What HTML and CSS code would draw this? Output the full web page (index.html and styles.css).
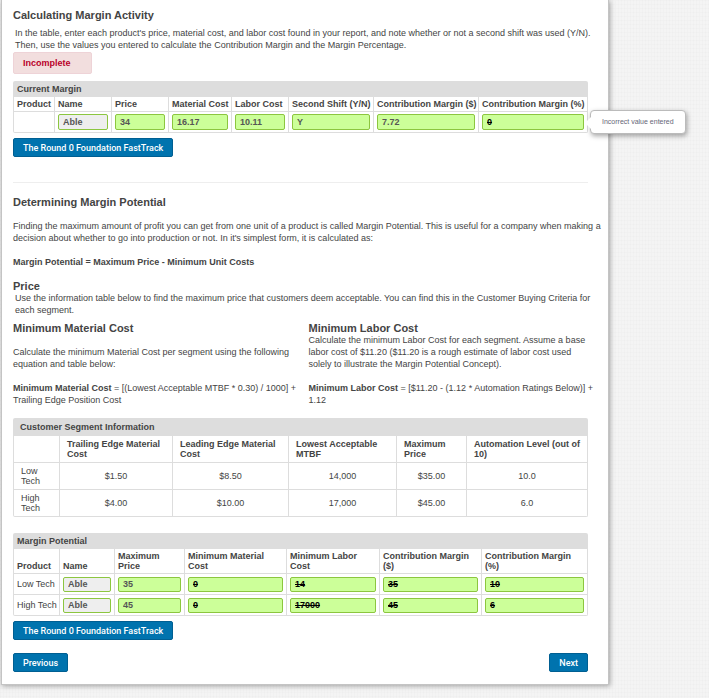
FILE: index.html
```html
<!DOCTYPE html>
<html lang="en">
<head>
    <meta charset="UTF-8">
    <meta name="viewport" content="width=device-width, initial-scale=1.0">
    <title>Margin Activity</title>
    <link rel="stylesheet" href="styles.css">
</head>
<body>

    <main class="page">
        <section class="activity">
            <h2>Calculating Margin Activity</h2>
            <p class="indent wide">In the table, enter each product's price, material cost, and labor cost found in your report, and note whether or not a second shift was used (Y/N). Then, use the values you entered to calculate the Contribution Margin and the Margin Percentage.</p>
            <div class="status">Incomplete</div>

            <table class="current-margin">
                <caption>Current Margin</caption>
                <colgroup>
                    <col class="col-product">
                    <col class="col-small">
                    <col class="col-small">
                    <col class="col-material">
                    <col class="col-small">
                    <col class="col-shift">
                    <col class="col-margin">
                    <col>
                </colgroup>
                <thead>
                    <tr>
                        <th>Product</th>
                        <th>Name</th>
                        <th>Price</th>
                        <th>Material Cost</th>
                        <th>Labor Cost</th>
                        <th>Second Shift (Y/N)</th>
                        <th>Contribution Margin ($)</th>
                        <th>Contribution Margin (%)</th>
                    </tr>
                </thead>
                <tbody>
                    <tr>
                        <td></td>
                        <td><input type="text" class="name" aria-label="Name" value="Able" readonly></td>
                        <td><input type="text" aria-label="Price" value="34"></td>
                        <td><input type="text" aria-label="Material Cost" value="16.17"></td>
                        <td><input type="text" aria-label="Labor Cost" value="10.11"></td>
                        <td><input type="text" aria-label="Second Shift (Y/N)" value="Y"></td>
                        <td><input type="text" aria-label="Contribution Margin ($)" value="7.72"></td>
                        <td class="has-tooltip">
                            <input type="text" class="wrong" aria-label="Contribution Margin (%)" aria-describedby="marginError" value="0">
                            <div class="tooltip" id="marginError" role="tooltip">Incorrect value entered</div>
                        </td>
                    </tr>
                </tbody>
            </table>

            <button type="button">The Round 0 Foundation FastTrack</button>
        </section>

        <section class="potential">
            <h2>Determining Margin Potential</h2>
            <p class="spaced wide">Finding the maximum amount of profit you can get from one unit of a product is called Margin Potential. This is useful for a company when making a decision about whether to go into production or not. In it's simplest form, it is calculated as:</p>
            <p class="spaced"><strong>Margin Potential = Maximum Price - Minimum Unit Costs</strong></p>

            <h3>Price</h3>
            <p class="indent wide">Use the information table below to find the maximum price that customers deem acceptable. You can find this in the Customer Buying Criteria for each segment.</p>

            <div class="columns">
                <div class="column">
                    <h3>Minimum Material Cost</h3>
                    <p class="spaced">Calculate the minimum Material Cost per segment using the following equation and table below:</p>
                    <p class="spaced wide"><strong>Minimum Material Cost</strong> = [(Lowest Acceptable MTBF * 0.30) / 1000] + Trailing Edge Position Cost</p>
                </div>
                <div class="column">
                    <h3>Minimum Labor Cost</h3>
                    <p>Calculate the minimum Labor Cost for each segment. Assume a base labor cost of $11.20 ($11.20 is a rough estimate of labor cost used solely to illustrate the Margin Potential Concept).</p>
                    <p class="spaced wide"><strong>Minimum Labor Cost</strong> = [$11.20 - (1.12 * Automation Ratings Below)] + 1.12</p>
                </div>
            </div>

            <table class="segments">
                <caption>Customer Segment Information</caption>
                <colgroup>
                    <col class="col-segment">
                    <col class="col-edge">
                    <col class="col-leading">
                    <col class="col-mtbf">
                    <col class="col-price">
                    <col>
                </colgroup>
                <thead>
                    <tr>
                        <th></th>
                        <th>Trailing Edge Material Cost</th>
                        <th>Leading Edge Material Cost</th>
                        <th>Lowest Acceptable MTBF</th>
                        <th>Maximum Price</th>
                        <th>Automation Level (out of 10)</th>
                    </tr>
                </thead>
                <tbody>
                    <tr>
                        <td class="segment">Low Tech</td>
                        <td>$1.50</td>
                        <td>$8.50</td>
                        <td>14,000</td>
                        <td>$35.00</td>
                        <td>10.0</td>
                    </tr>
                    <tr>
                        <td class="segment">High Tech</td>
                        <td>$4.00</td>
                        <td>$10.00</td>
                        <td>17,000</td>
                        <td>$45.00</td>
                        <td>6.0</td>
                    </tr>
                </tbody>
            </table>

            <table class="margin-potential">
                <caption>Margin Potential</caption>
                <colgroup>
                    <col class="col-segment">
                    <col class="col-name">
                    <col class="col-price">
                    <col class="col-cost">
                    <col class="col-labor">
                    <col class="col-cost">
                    <col>
                </colgroup>
                <thead>
                    <tr>
                        <th>Product</th>
                        <th>Name</th>
                        <th>Maximum Price</th>
                        <th>Minimum Material Cost</th>
                        <th>Minimum Labor Cost</th>
                        <th>Contribution Margin ($)</th>
                        <th>Contribution Margin (%)</th>
                    </tr>
                </thead>
                <tbody>
                    <tr>
                        <td>Low Tech</td>
                        <td><input type="text" class="name" aria-label="Low Tech Name" value="Able" readonly></td>
                        <td><input type="text" aria-label="Low Tech Maximum Price" value="35"></td>
                        <td><input type="text" class="wrong" aria-label="Low Tech Minimum Material Cost" value="0"></td>
                        <td><input type="text" class="wrong" aria-label="Low Tech Minimum Labor Cost" value="14"></td>
                        <td><input type="text" class="wrong" aria-label="Low Tech Contribution Margin ($)" value="35"></td>
                        <td><input type="text" class="wrong" aria-label="Low Tech Contribution Margin (%)" value="10"></td>
                    </tr>
                    <tr>
                        <td>High Tech</td>
                        <td><input type="text" class="name" aria-label="High Tech Name" value="Able" readonly></td>
                        <td><input type="text" aria-label="High Tech Maximum Price" value="45"></td>
                        <td><input type="text" class="wrong" aria-label="High Tech Minimum Material Cost" value="0"></td>
                        <td><input type="text" class="wrong" aria-label="High Tech Minimum Labor Cost" value="17000"></td>
                        <td><input type="text" class="wrong" aria-label="High Tech Contribution Margin ($)" value="45"></td>
                        <td><input type="text" class="wrong" aria-label="High Tech Contribution Margin (%)" value="6"></td>
                    </tr>
                </tbody>
            </table>

            <button type="button">The Round 0 Foundation FastTrack</button>
        </section>

        <nav class="pager">
            <button type="button">Previous</button>
            <button type="button">Next</button>
        </nav>
    </main>

</body>
</html>
```
FILE: styles.css
```css
* {
    box-sizing: border-box;
}

body {
    margin: 0;
    padding: 0 100px 14px 1px;
    background-color: #f4f4f4;
    background-image:
        repeating-linear-gradient(90deg, rgba(0, 0, 0, 0.01) 0 1px, transparent 1px 3px),
        repeating-linear-gradient(rgba(0, 0, 0, 0.01) 0 1px, transparent 1px 4px);
    color: #444;
    font-family: Arial, "Liberation Sans", sans-serif;
    font-size: 9px;
    line-height: 12px;
}

.page {
    padding: 9px 20px 12px 11px;
    background-color: #fff;
    border: 1px solid #c4c4c4;
    border-top: none;
    box-shadow: 1px 1px 5px rgba(0, 0, 0, 0.35);
}

h2, h3 {
    margin: 0;
    font-size: 11px;
    line-height: 12px;
}

p {
    margin: 0;
}

h2 + .indent {
    margin-top: 6px;
}

.indent {
    padding: 0 2px;
}

.spaced {
    margin: 12px 0;
}

/* long lines run a little into the page padding */
.wide {
    margin-right: -16px;
}

.status {
    width: 79px;
    margin-top: 1px;
    padding: 4px 9px;
    background-color: #f2dede;
    border: 1px solid #eed3d7;
    border-radius: 2px;
    color: #b9002a;
    font-weight: bold;
}

/* Tables */
table {
    width: 100%;
    table-layout: fixed;
    border-collapse: separate;
    border-spacing: 0;
}

caption {
    padding: 2px 4px;
    background-color: #ddd;
    border-radius: 2px 2px 0 0;
    font-weight: bold;
    text-align: left;
}

th, td {
    border-right: 1px solid #ddd;
    border-bottom: 1px solid #ddd;
    line-height: 10px;
}

th:first-child, td:first-child {
    border-left: 1px solid #ddd;
}

th {
    padding: 2px 3px;
    text-align: left;
    vertical-align: bottom;
    white-space: nowrap;
}

td {
    height: 21px;
    padding: 2px 3px;
    white-space: nowrap;
}

tbody tr:last-child td:first-child {
    border-bottom-left-radius: 2px;
}

tbody tr:last-child td:last-child {
    border-bottom-right-radius: 2px;
}

.current-margin {
    margin-top: 7px;
}

.segments caption {
    padding: 3px 7px;
}

.segments th {
    padding: 3px 7px;
    white-space: normal;
}

.segments td {
    height: 27px;
    padding: 3px 7px;
    text-align: center;
    white-space: normal;
}

.segments .segment {
    text-align: left;
}

.margin-potential {
    margin-top: 16px;
}

.margin-potential th {
    white-space: normal;
}

.col-product {
    width: 42px;
}

.col-small {
    width: 57px;
}

.col-material {
    width: 63px;
}

.col-shift {
    width: 85px;
}

.col-margin {
    width: 105px;
}

.col-segment {
    width: 47px;
}

.col-edge {
    width: 113px;
}

.col-leading {
    width: 116px;
}

.col-mtbf {
    width: 108px;
}

.col-price {
    width: 70px;
}

.col-name {
    width: 55px;
}

.col-cost {
    width: 102px;
}

.col-labor {
    width: 93px;
}

/* Answer fields */
input {
    display: block;
    width: 100%;
    height: 16px;
    padding: 0 4px;
    background-color: #cf9;
    border: 1px solid #8cc63f;
    border-radius: 2px;
    color: #555;
    font-family: inherit;
    font-size: 9px;
    font-weight: bold;
}

.margin-potential input {
    height: 15px;
}

.name {
    background-color: #eee;
}

.wrong {
    color: #000;
    text-decoration: line-through;
}

.has-tooltip {
    position: relative;
}

.tooltip {
    position: absolute;
    top: -2px;
    left: 100%;
    margin-left: 3px;
    padding: 5px 11px;
    background-color: #fff;
    border: 1px solid #bbb;
    border-radius: 4px;
    box-shadow: 1px 2px 5px rgba(0, 0, 0, 0.35);
    color: #667;
    font-size: 7px;
    line-height: 12px;
    white-space: nowrap;
}

.tooltip::before {
    content: "";
    position: absolute;
    top: 6px;
    left: -6px;
    border: 6px solid transparent;
    border-right-color: #fff;
    border-left: none;
}

/* Buttons */
button {
    display: block;
    height: 19px;
    padding: 0 9px;
    background-color: #0073ae;
    border: 1px solid #005f92;
    border-radius: 2px;
    color: #fff;
    font-family: Roboto, Arial, sans-serif;
    font-size: 9px;
    font-weight: 500;
    cursor: pointer;
}

table + button {
    margin-top: 5px;
}

.potential {
    margin-top: 25px;
    padding-top: 13px;
    border-top: 1px solid #eee;
}

.columns {
    display: grid;
    grid-template-columns: 1fr 1fr;
    gap: 16px;
    margin-top: 6px;
}

.pager {
    display: flex;
    justify-content: space-between;
    margin-top: 13px;
}
```
